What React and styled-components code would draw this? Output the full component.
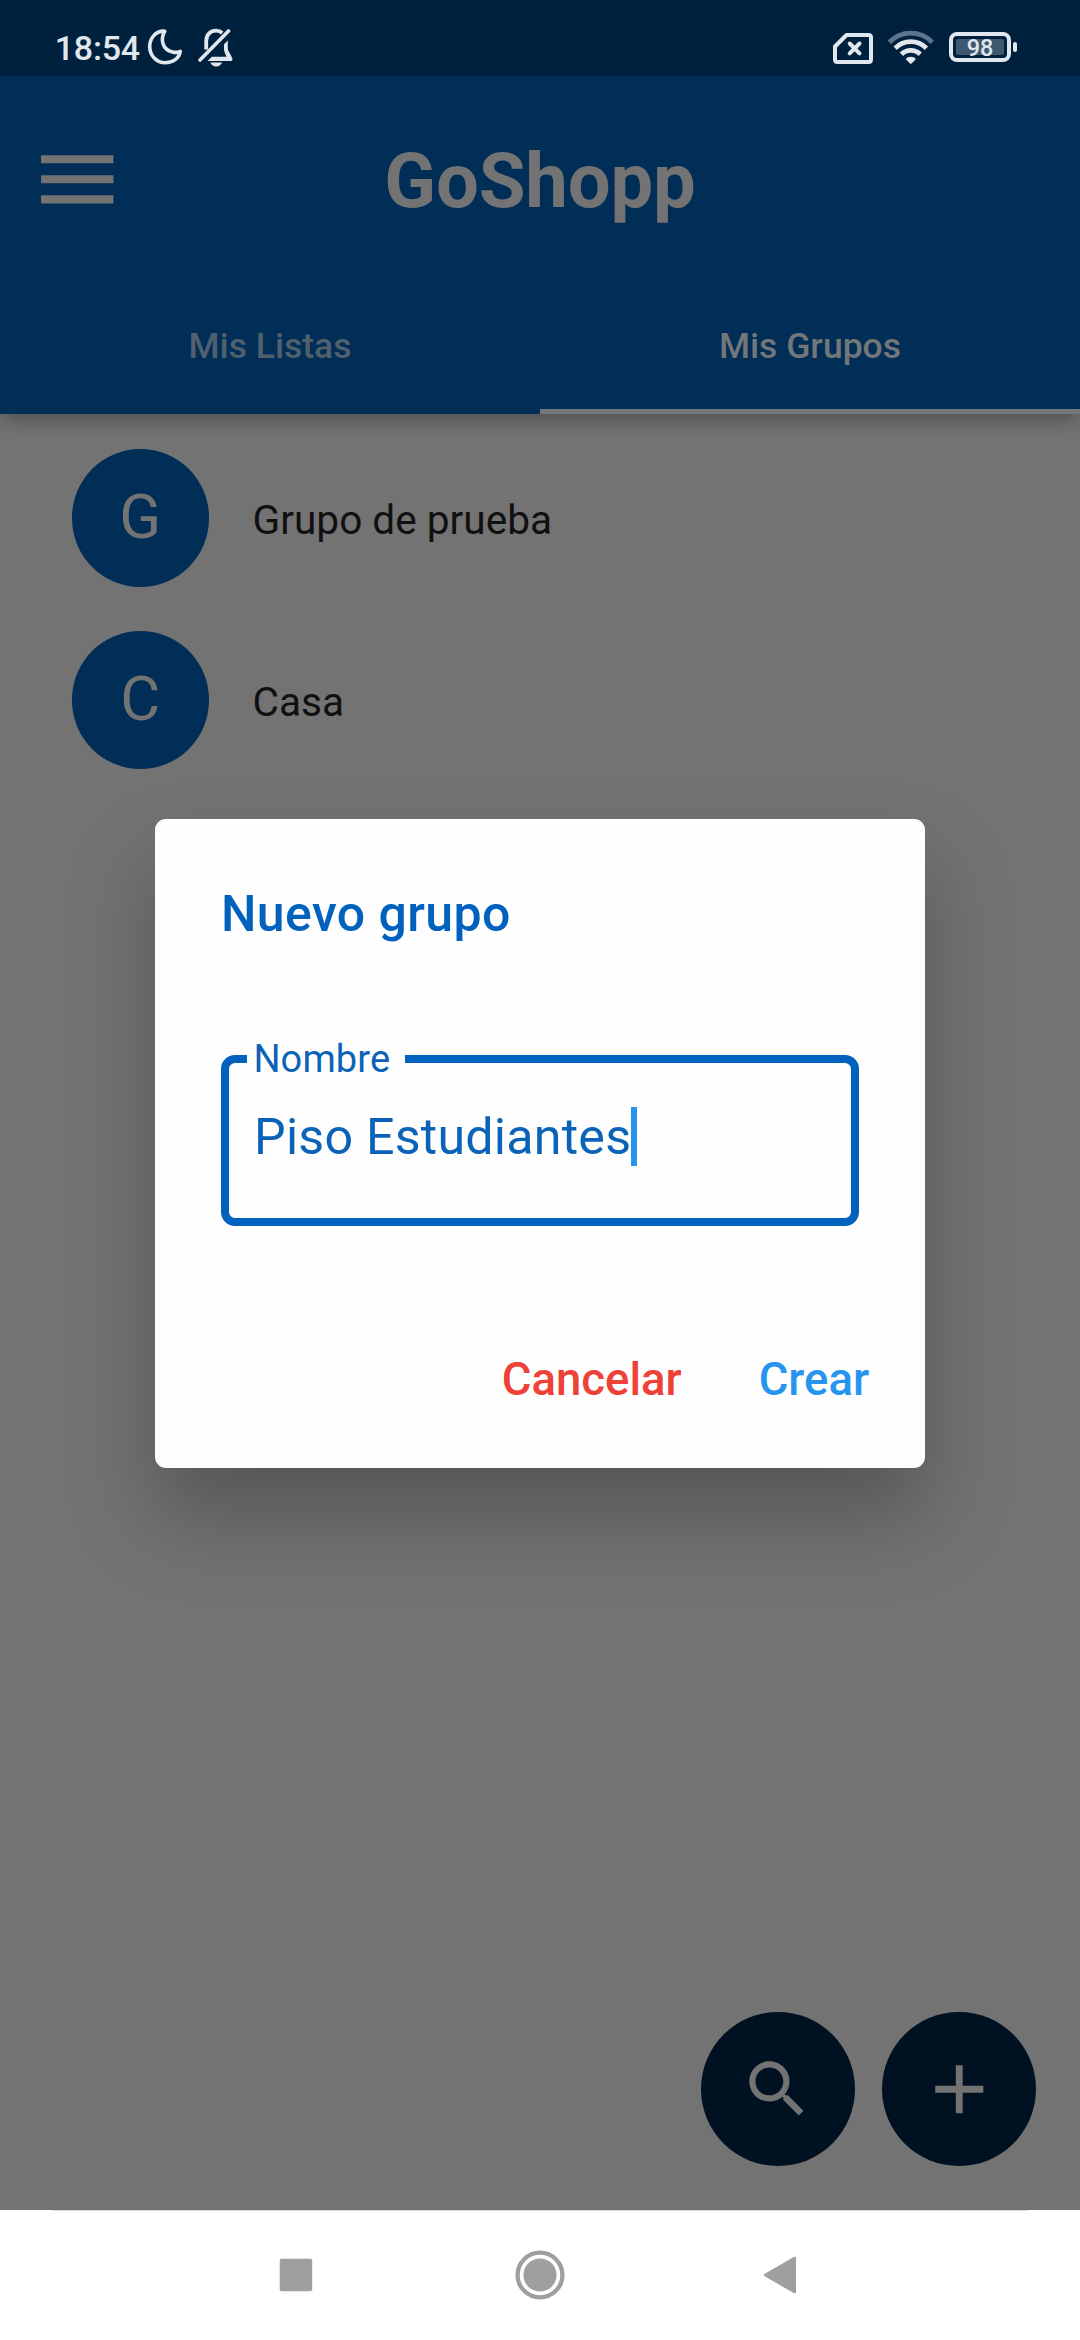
import React from "react";
import styled, { createGlobalStyle } from "styled-components";

const Global = createGlobalStyle`
  * { box-sizing: border-box; }
  body { margin: 0; background: #737373; font-family: Roboto, "Noto Sans", sans-serif; }
  button { font: inherit; border: 0; background: none; padding: 0; margin: 0; }
`;

const Screen = styled.div`
  position: relative;
  width: 1080px;
  height: 2340px;
  overflow: hidden;
  display: flex;
  flex-direction: column;
  background: #737373;
`;

const StatusBar = styled.div`
  height: 76px;
  flex: none;
  display: flex;
  align-items: flex-start;
  justify-content: space-between;
  padding: 0 63px 0 54.7px;
  background: #00213e;
  color: #e1e7ee;
`;

const Clock = styled.span`
  font-size: 34px;
  font-weight: 500;
  line-height: 40px;
  letter-spacing: -0.2px;
  padding-top: 28px;
  width: 92.4px;
  white-space: nowrap;
`;

const StatusGroup = styled.div`
  display: flex;
  align-items: flex-start;
`;

const Glyph = styled.svg`
  display: block;
  flex: none;
  margin-left: ${(p) => p.$gap || 0}px;
`;

const Header = styled.header`
  height: 338px;
  flex: none;
  display: flex;
  flex-direction: column;
  background: #002e56;
  box-shadow: 0 10px 16px -2px rgba(0, 0, 0, 0.27);
`;

const TitleRow = styled.div`
  height: 206px;
  display: grid;
  grid-template-columns: 154px 1fr 154px;
  align-items: center;
`;

const MenuButton = styled.button`
  display: flex;
  padding-left: 29px;
`;

const AppTitle = styled.h1`
  margin: 0;
  padding-top: 4px;
  text-align: center;
  font-size: 76px;
  line-height: 90px;
  letter-spacing: -0.15px;
  font-weight: 700;
  color: #737373;
`;

const Tabs = styled.nav`
  flex: 1;
  display: grid;
  grid-template-columns: 1fr 1fr;
`;

const Tab = styled.div`
  display: flex;
  align-items: center;
  justify-content: center;
  border-bottom: 5.5px solid ${(p) => (p.$active ? "#757679" : "transparent")};
  color: ${(p) => (p.$active ? "#74777a" : "#50606e")};
  font-size: 35.5px;
  font-weight: 500;
`;

const Body = styled.main`
  flex: 1;
  display: flex;
  flex-direction: column;
  justify-content: space-between;
  padding: 35.3px 44px 44px 71.5px;
`;

const GroupList = styled.div`
  display: flex;
  flex-direction: column;
  gap: 44.5px;
`;

const GroupRow = styled.div`
  display: flex;
  align-items: center;
  gap: 43.6px;
`;

const Avatar = styled.div`
  width: 137.5px;
  height: 137.5px;
  border-radius: 50%;
  display: flex;
  align-items: center;
  justify-content: center;
  padding-bottom: 2px;
  background: #002e56;
  color: #737373;
  font-size: 61.5px;
`;

const GroupName = styled.span`
  color: #101010;
  font-size: 40.6px;
  line-height: 48px;
  padding-top: 3.5px;
`;

const Fabs = styled.div`
  display: flex;
  justify-content: flex-end;
  gap: 27.5px;
`;

const Fab = styled.button`
  width: 154px;
  height: 154px;
  border-radius: 50%;
  display: flex;
  align-items: center;
  justify-content: center;
  background: #001122;
`;

const NavBar = styled.footer`
  height: 130px;
  flex: none;
  display: grid;
  grid-template-columns: 236.4px 248.1px auto;
  justify-content: start;
  align-items: center;
  padding-left: 279px;
  background: linear-gradient(#dedede, #dedede) 52px 0 / 976px 1px no-repeat, #fff;
`;

const Overlay = styled.div`
  position: absolute;
  left: 0;
  right: 0;
  top: 76px;
  bottom: 130px;
  display: flex;
  align-items: center;
  justify-content: center;
`;

const Dialog = styled.section`
  width: 770px;
  height: 649px;
  border-radius: 11px;
  background: #fefefe;
  padding: 65px 56px 55px 66px;
  display: flex;
  flex-direction: column;
  box-shadow: 0 48px 84px rgba(0, 0, 0, 0.25);
`;

const DialogTitle = styled.h2`
  margin: 0;
  font-size: 50px;
  line-height: 60px;
  letter-spacing: 0.4px;
  font-weight: 500;
  color: #0062bd;
`;

const Field = styled.fieldset`
  margin: 87.5px 0 0;
  width: 638px;
  height: 194.5px;
  padding: 0 0 0 25px;
  border: 8px solid #0062bd;
  border-radius: 14px;
`;

const FieldLabel = styled.legend`
  margin-left: -7px;
  padding: 0 0 0 6.4px;
  width: 158px;
  font-size: 38px;
  line-height: 56px;
  letter-spacing: 0.12px;
  color: #0b63b8;
`;

const FieldValue = styled.div`
  display: flex;
  align-items: center;
  height: 60px;
  margin-top: 19.7px;
  font-size: 50.2px;
  letter-spacing: 0.22px;
  color: #0b63b8;
  white-space: nowrap;
`;

const Caret = styled.i`
  width: 5.5px;
  height: 59px;
  background: #2795ee;
`;

const Actions = styled.div`
  display: flex;
  justify-content: flex-end;
  gap: 77px;
  margin-top: auto;
`;

const Action = styled.button`
  font-size: 45.5px;
  line-height: 66px;
  font-weight: 500;
  color: ${(p) => p.$color};
`;

const BatteryCase = styled.div`
  margin: 32px 0 0 14px;
  width: 62px;
  height: 30px;
  border: 4px solid #e1e7ee;
  border-radius: 8px;
  padding: 3px;
  display: flex;
`;

const BatteryLevel = styled.div`
  flex: 1;
  border-radius: 2px;
  background: #40586f;
  display: flex;
  align-items: center;
  justify-content: center;
  font-size: 23.5px;
  line-height: 16px;
  font-weight: 500;
  padding-top: 2px;
`;

const BatteryTip = styled.div`
  margin: 42px 0 0 2px;
  width: 4px;
  height: 10px;
  border-radius: 2px;
  background: #e1e7ee;
`;

const INK = "#e1e7ee";

function Moon() {
  return (
    <Glyph width="36" height="76" viewBox="0 0 36 76" fill="none">
      <path
        d="M17.8 31.200C8.500 30.500 2.700 38.500 2.700 46.500c0 9 6.800 16.300 15.600 16.300 7.500 0 14-4.500 15-11.500-2.500 1.200-5.300 1.400-7.800.7C15.800 49.800 12.800 40 17.800 31.200Z"
        stroke={INK}
        strokeWidth="3.600"
        strokeLinejoin="round"
      />
    </Glyph>
  );
}

function MutedBell() {
  return (
    <Glyph $gap={15} width="36" height="76" viewBox="0 0 36 76" fill="none">
      <path d="M2 60L30.500 31" stroke={INK} strokeWidth="3.600" strokeLinecap="round" />
      <path d="M8.200 49.500V41c0-6.500 4.500-10.300 9.800-10.300 2.800 0 4.800 1 6.200 2.300" stroke={INK} strokeWidth="3.800" />
      <path
        d="M29.800 40.500v8c0 2.500 3.300 6 4.600 10.300.4 1.300-.3 2.300-1.500 2.300H9.500l4.300-4.300h14.800c-1.600-3-2.600-5.500-2.600-8v-4.500Z"
        fill={INK}
      />
      <path d="M12.300 62.600h11.800c-.8 2.400-3 3.900-5.900 3.900s-5.100-1.500-5.900-3.900Z" fill={INK} />
    </Glyph>
  );
}

function NoSim() {
  return (
    <Glyph width="40" height="76" viewBox="0 0 40 76" fill="none" stroke={INK}>
      <path
        d="M13.500 35H35.500Q38 35 38 37.500V59.500Q38 62 35.500 62H4.500Q2 62 2 59.500V46.500Z"
        strokeWidth="4"
        strokeLinejoin="round"
      />
      <path d="M16.700 43.500l9.800 9.800M26.500 43.500l-9.800 9.800" strokeWidth="4" strokeLinecap="round" />
    </Glyph>
  );
}

function Wifi() {
  return (
    <Glyph $gap={14} width="48" height="76" viewBox="0 0 48 76" fill="none" stroke={INK} strokeWidth="4.800">
      <path d="M2.300 42.200C14.300 30.200 33.300 30.200 45.300 42.200" opacity=".42" />
      <path d="M8.200 48.200c8.700-8.700 22.500-8.700 31.200 0" />
      <path d="M14.400 54.300c5.300-5.200 13.500-5.200 18.800 0" />
      <path
        d="M23.800 56.800c2.100 0 3.800.7 4.700 1.900.2.300.1.700-.2 1.100L24.500 63.600c-.4.400-1 .4-1.400 0l-3.800-3.800c-.3-.4-.4-.8-.2-1.100.9-1.200 2.600-1.900 4.700-1.900Z"
        fill={INK}
        stroke="none"
      />
    </Glyph>
  );
}

const groups = ["Grupo de prueba", "Casa"];

export default function App() {
  return (
    <Screen>
      <Global />
      <StatusBar>
        <StatusGroup>
          <Clock>18:54</Clock>
          <Moon />
          <MutedBell />
        </StatusGroup>
        <StatusGroup>
          <NoSim />
          <Wifi />
          <BatteryCase>
            <BatteryLevel>98</BatteryLevel>
          </BatteryCase>
          <BatteryTip />
        </StatusGroup>
      </StatusBar>

      <Header>
        <TitleRow>
          <MenuButton aria-label="Menú">
            <Glyph width="96.500" height="96.500" viewBox="0 0 24 24" fill="#737373">
              <path d="M3 18h18v-2H3v2zm0-5h18v-2H3v2zm0-7v2h18V6H3z" />
            </Glyph>
          </MenuButton>
          <AppTitle>GoShopp</AppTitle>
        </TitleRow>
        <Tabs>
          <Tab>Mis Listas</Tab>
          <Tab $active>Mis Grupos</Tab>
        </Tabs>
      </Header>

      <Body>
        <GroupList>
          {groups.map((name) => (
            <GroupRow key={name}>
              <Avatar>{name[0]}</Avatar>
              <GroupName>{name}</GroupName>
            </GroupRow>
          ))}
        </GroupList>
        <Fabs>
          <Fab aria-label="Buscar">
            <Glyph width="74.250" height="74.250" viewBox="0 0 24 24" fill="#737373">
              <path d="M15.500 14h-.79l-.28-.27C15.410 12.590 16 11.110 16 9.500 16 5.910 13.090 3 9.500 3S3 5.910 3 9.500 5.910 16 9.500 16c1.610 0 3.090-.59 4.230-1.570l.27.28v.79l5 4.990L20.490 19l-4.990-5zm-6 0C7.010 14 5 11.990 5 9.500S7.010 5 9.500 5 14 7.010 14 9.500 11.990 14 9.500 14z" />
            </Glyph>
          </Fab>
          <Fab aria-label="Añadir">
            <Glyph width="82.500" height="82.500" viewBox="0 0 24 24" fill="#737373">
              <path d="M19 13h-6v6h-2v-6H5v-2h6V5h2v6h6v2z" />
            </Glyph>
          </Fab>
        </Fabs>
      </Body>

      <NavBar>
        <Glyph width="34" height="34" viewBox="0 0 34 34">
          <rect x="0.700" y="0.700" width="32.500" height="32.500" rx="2" fill="#9f9f9f" />
        </Glyph>
        <Glyph width="50" height="50" viewBox="0 0 50 50">
          <circle cx="25" cy="25" r="22.400" fill="none" stroke="#9f9f9f" strokeWidth="4.300" />
          <circle cx="25" cy="25" r="16.600" fill="#9f9f9f" />
        </Glyph>
        <Glyph width="34" height="38" viewBox="0 0 34 38">
          <path
            d="M31.500 2.200V35.800L2.500 19Z"
            fill="#9f9f9f"
            stroke="#9f9f9f"
            strokeWidth="3"
            strokeLinejoin="round"
          />
        </Glyph>
      </NavBar>

      <Overlay>
        <Dialog role="dialog">
          <DialogTitle>Nuevo grupo</DialogTitle>
          <Field>
            <FieldLabel>Nombre</FieldLabel>
            <FieldValue>
              Piso Estudiantes
              <Caret />
            </FieldValue>
          </Field>
          <Actions>
            <Action $color="#ee4238">Cancelar</Action>
            <Action $color="#2795ee">Crear</Action>
          </Actions>
        </Dialog>
      </Overlay>
    </Screen>
  );
}
